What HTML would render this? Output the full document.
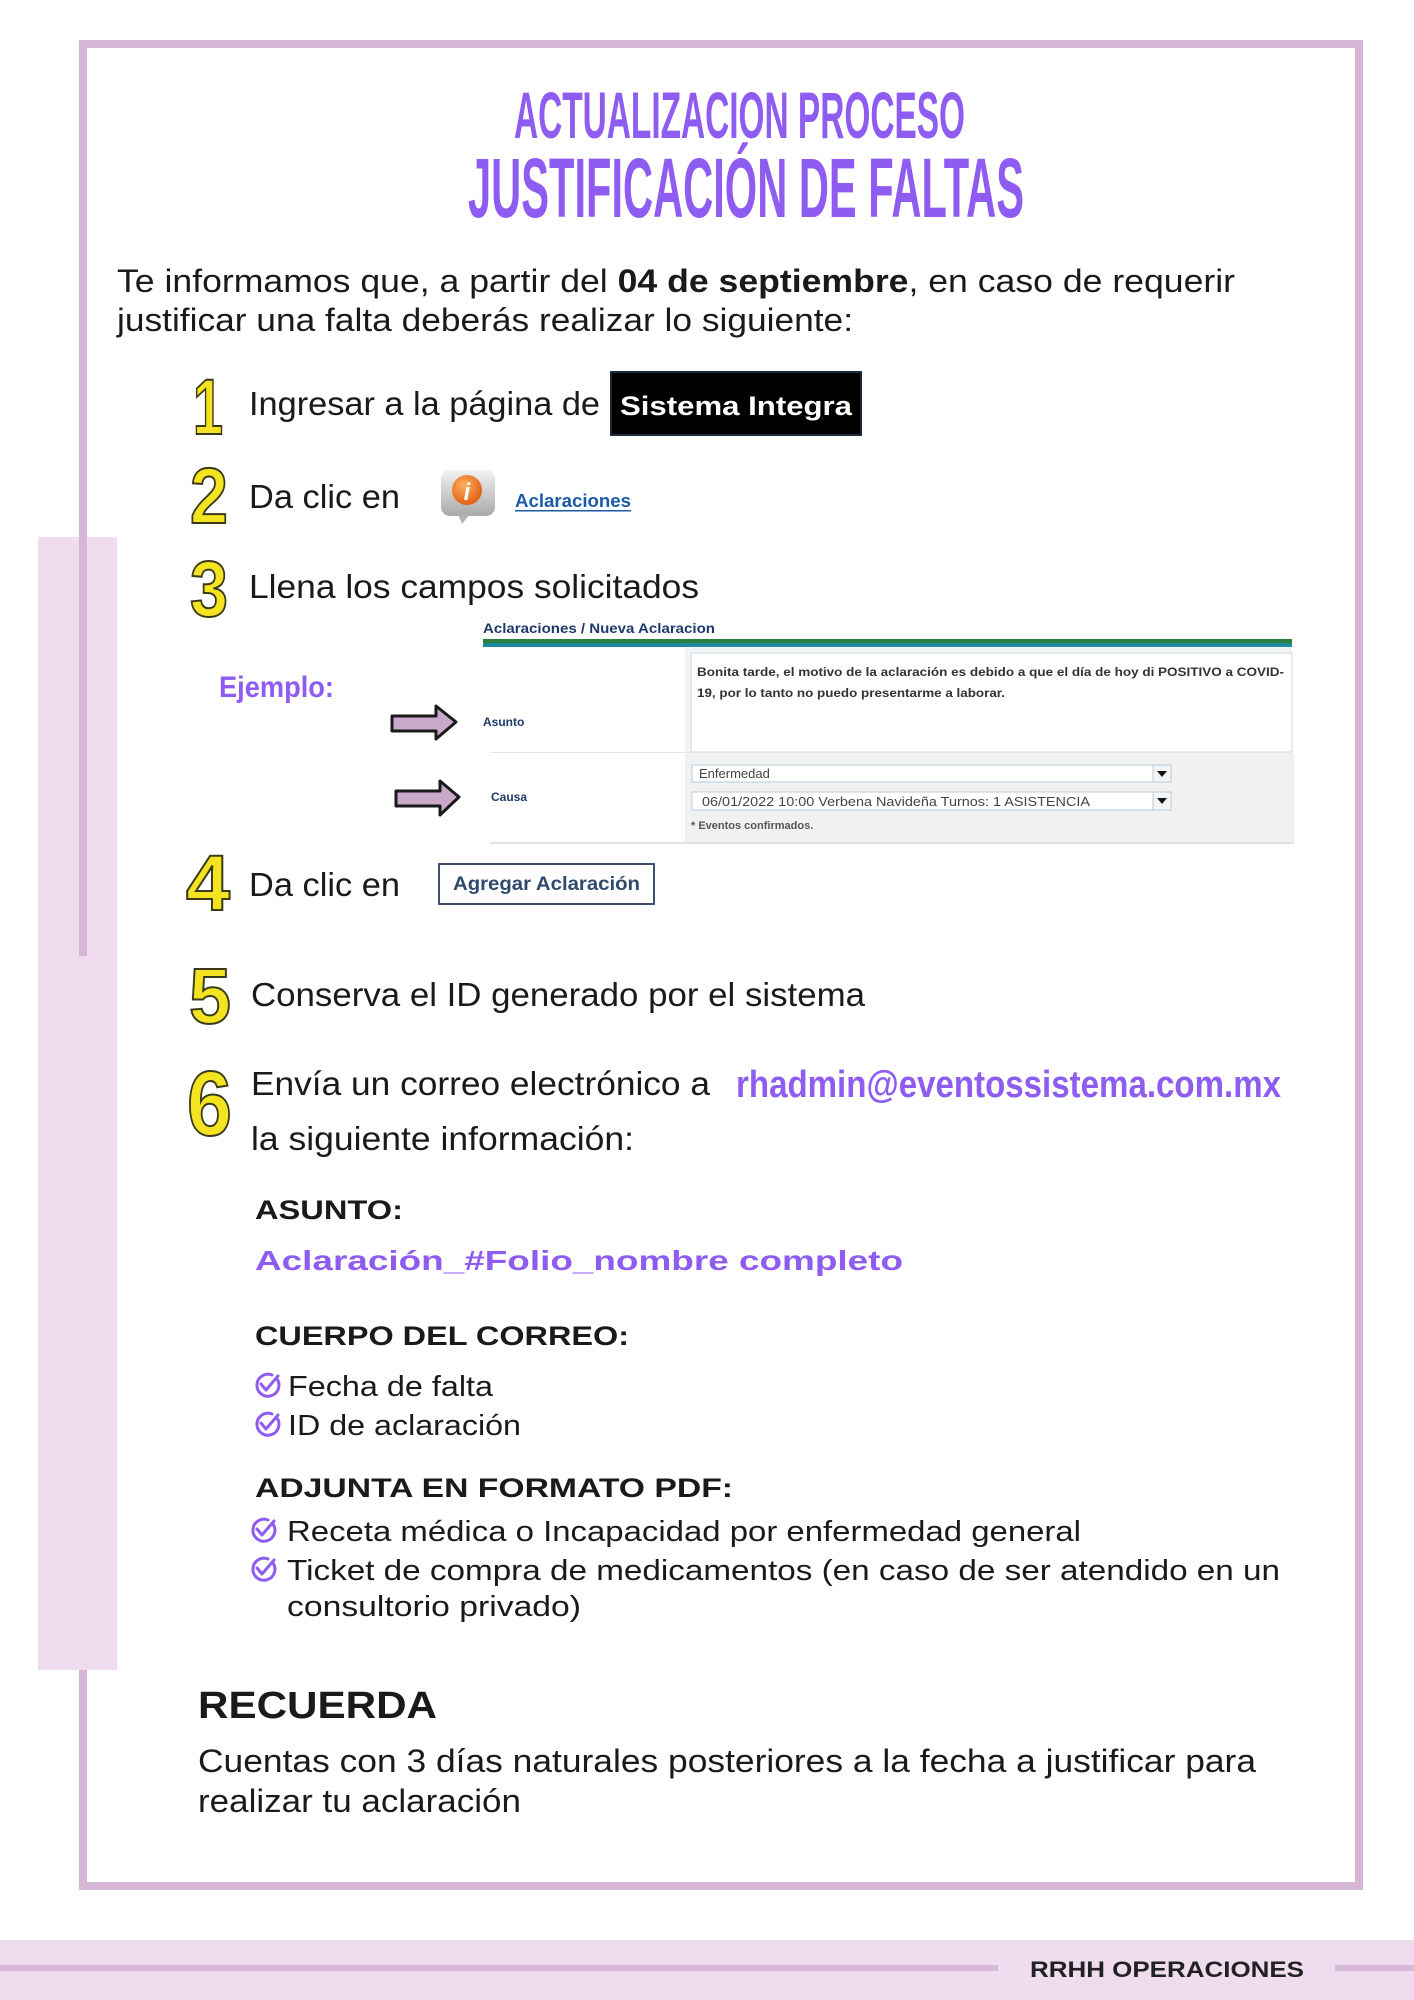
<!DOCTYPE html>
<html><head><meta charset="utf-8"><style>
html,body{margin:0;padding:0;background:#fff;width:1414px;height:2000px;overflow:hidden}
svg{display:block}
text{font-family:"Liberation Sans",sans-serif}
</style></head><body>
<svg width="1414" height="2000" viewBox="0 0 1414 2000" xmlns="http://www.w3.org/2000/svg">
<defs>
<linearGradient id="bar" x1="0" y1="0" x2="0" y2="1"><stop offset="0" stop-color="#2a7f3a"/><stop offset="0.45" stop-color="#2a7f3a"/><stop offset="0.55" stop-color="#1b8c9e"/><stop offset="1" stop-color="#1b8c9e"/></linearGradient>
<linearGradient id="ic" x1="0" y1="0" x2="0" y2="1"><stop offset="0" stop-color="#f2f2f2"/><stop offset="1" stop-color="#a9a9a9"/></linearGradient>
<radialGradient id="or" cx="0.4" cy="0.35" r="0.7"><stop offset="0" stop-color="#ffb060"/><stop offset="1" stop-color="#e05a10"/></radialGradient>
</defs>
<!-- pink side block -->
<rect x="38" y="537" width="79" height="1133" fill="#efdcee"/>
<!-- frame -->
<rect x="79" y="40" width="1284" height="8" fill="#d5b6d5"/>
<rect x="1355" y="40" width="8" height="1850" fill="#d5b6d5"/>
<rect x="79" y="1882" width="1284" height="8" fill="#d5b6d5"/>
<rect x="79" y="40" width="8" height="916" fill="#d5b6d5"/>
<rect x="79" y="1670" width="8" height="220" fill="#d5b6d5"/>

<!-- titles -->
<text x="514" y="138" font-size="66" font-weight="bold" fill="#8f5cf2" textLength="451" lengthAdjust="spacingAndGlyphs">ACTUALIZACION PROCESO</text>
<text x="468" y="217" font-size="84" font-weight="bold" fill="#8f5cf2" textLength="556" lengthAdjust="spacingAndGlyphs">JUSTIFICACIÓN DE FALTAS</text>

<!-- intro -->
<text x="117" y="292" font-size="32" fill="#1a1a1a" textLength="1118" lengthAdjust="spacingAndGlyphs">Te informamos que, a partir del <tspan font-weight="bold">04 de septiembre</tspan>, en caso de requerir</text>
<text x="117" y="331" font-size="32" fill="#1a1a1a" textLength="736" lengthAdjust="spacingAndGlyphs">justificar una falta deberás realizar lo siguiente:</text>

<!-- step numbers -->
<g font-size="79" font-weight="bold" fill="#f4e320" stroke="#3a3a1a" stroke-width="2">
<text x="193" y="434" textLength="30" lengthAdjust="spacingAndGlyphs">1</text>
<text x="190" y="523" textLength="38" lengthAdjust="spacingAndGlyphs">2</text>
<text x="190" y="616" textLength="38" lengthAdjust="spacingAndGlyphs">3</text>
<text x="186" y="910" textLength="44" lengthAdjust="spacingAndGlyphs">4</text>
<text x="189" y="1023" textLength="42" lengthAdjust="spacingAndGlyphs">5</text>
<text x="187" y="1135" font-size="92" textLength="45" lengthAdjust="spacingAndGlyphs">6</text>
</g>

<!-- step 1 -->
<text x="249" y="415" font-size="33" fill="#1a1a1a" textLength="351" lengthAdjust="spacingAndGlyphs">Ingresar a la página de</text>
<rect x="611" y="372" width="250" height="63" fill="#000"/>
<rect x="611" y="372" width="250" height="63" fill="none" stroke="#1a2a3a" stroke-width="2"/>
<text x="620" y="415" font-size="27" font-weight="bold" fill="#fff" textLength="232" lengthAdjust="spacingAndGlyphs">Sistema Integra</text>

<!-- step 2 -->
<text x="249" y="508" font-size="33" fill="#1a1a1a" textLength="151" lengthAdjust="spacingAndGlyphs">Da clic en</text>
<rect x="441" y="470" width="54" height="46" rx="9" fill="url(#ic)"/>
<polygon points="458,514 470,514 462,524" fill="#b0b0b0"/>
<circle cx="467" cy="490" r="15" fill="url(#or)"/>
<text x="467" y="500" font-size="24" font-weight="bold" font-style="italic" fill="#fff" text-anchor="middle">i</text>
<text x="515" y="507" font-size="18" font-weight="bold" fill="#1b5aa8" textLength="116" lengthAdjust="spacingAndGlyphs">Aclaraciones</text>
<rect x="515" y="510" width="116" height="1.5" fill="#1b5aa8"/>

<!-- step 3 -->
<text x="249" y="598" font-size="33" fill="#1a1a1a" textLength="450" lengthAdjust="spacingAndGlyphs">Llena los campos solicitados</text>

<!-- form screenshot -->
<text x="483" y="633" font-size="14" font-weight="bold" fill="#1f3a6a" textLength="232" lengthAdjust="spacingAndGlyphs">Aclaraciones  /  Nueva Aclaracion</text>
<rect x="483" y="639" width="809" height="8" fill="url(#bar)"/>
<rect x="685" y="647" width="607" height="106" fill="#f4f4f4"/>
<rect x="691" y="653" width="601" height="99" fill="#fff" stroke="#c9d9ea" stroke-width="1"/>
<rect x="490" y="752" width="802" height="1" fill="#e6e6e6"/>
<rect x="685" y="753" width="609" height="89" fill="#f1f1f1"/>
<rect x="490" y="842" width="804" height="2" fill="#e2e2e2"/>
<text x="697" y="676" font-size="12" font-weight="bold" fill="#333" textLength="587" lengthAdjust="spacingAndGlyphs">Bonita tarde, el motivo de la aclaración es debido a que el día de hoy di POSITIVO a COVID-</text>
<text x="697" y="697" font-size="12" font-weight="bold" fill="#333" textLength="308" lengthAdjust="spacingAndGlyphs">19, por lo tanto no puedo presentarme a laborar.</text>
<text x="483" y="726" font-size="12" font-weight="bold" fill="#1f3a6a">Asunto</text>
<text x="491" y="801" font-size="12" font-weight="bold" fill="#1f3a6a">Causa</text>
<rect x="692" y="765" width="479" height="17" fill="#fff" stroke="#b8cce0"/>
<rect x="1153" y="765" width="18" height="17" fill="#f4f4f4" stroke="#b8cce0"/>
<polygon points="1157,771 1167,771 1162,777" fill="#111"/>
<text x="699" y="778" font-size="13" fill="#444">Enfermedad</text>
<rect x="692" y="792" width="479" height="18" fill="#fff" stroke="#b8cce0"/>
<rect x="1153" y="792" width="18" height="18" fill="#f4f4f4" stroke="#b8cce0"/>
<polygon points="1157,798 1167,798 1162,804" fill="#111"/>
<text x="702" y="806" font-size="13" fill="#444" textLength="388" lengthAdjust="spacingAndGlyphs">06/01/2022 10:00 Verbena Navideña Turnos: 1 ASISTENCIA</text>
<text x="691" y="829" font-size="11" font-weight="bold" fill="#555">* Eventos confirmados.</text>

<!-- arrows -->
<g stroke="#1a1a1a" stroke-width="3" stroke-linejoin="round">
<polygon points="392,716 436,716 436,706 456,722 436,739 436,731 392,731" fill="#c9a8c9"/>
<polygon points="396,791 440,791 440,781 459,797 440,815 440,806 396,806" fill="#c9a8c9"/>
</g>
<text x="219" y="697" font-size="30" font-weight="bold" fill="#8f5cf2" textLength="115" lengthAdjust="spacingAndGlyphs">Ejemplo:</text>

<!-- step 4 -->
<text x="249" y="896" font-size="33" fill="#1a1a1a" textLength="151" lengthAdjust="spacingAndGlyphs">Da clic en</text>
<rect x="439" y="864" width="215" height="40" fill="#fff" stroke="#3e5070" stroke-width="2"/>
<text x="453" y="890" font-size="19" font-weight="bold" fill="#2f4a6e" textLength="187" lengthAdjust="spacingAndGlyphs">Agregar Aclaración</text>

<!-- step 5 -->
<text x="251" y="1006" font-size="33" fill="#1a1a1a" textLength="614" lengthAdjust="spacingAndGlyphs">Conserva el ID generado por el sistema</text>

<!-- step 6 -->
<text x="251" y="1095" font-size="33" fill="#1a1a1a" textLength="459" lengthAdjust="spacingAndGlyphs">Envía un correo electrónico a</text>
<text x="736" y="1097" font-size="38" font-weight="bold" fill="#8f5cf2" textLength="545" lengthAdjust="spacingAndGlyphs">rhadmin@eventossistema.com.mx</text>
<text x="251" y="1150" font-size="33" fill="#1a1a1a" textLength="383" lengthAdjust="spacingAndGlyphs">la siguiente información:</text>

<text x="255" y="1219" font-size="27" font-weight="bold" fill="#1a1a1a" textLength="148" lengthAdjust="spacingAndGlyphs">ASUNTO:</text>
<text x="255" y="1270" font-size="28" font-weight="bold" fill="#8f5cf2" textLength="648" lengthAdjust="spacingAndGlyphs">Aclaración_#Folio_nombre completo</text>
<text x="255" y="1345" font-size="27" font-weight="bold" fill="#1a1a1a" textLength="374" lengthAdjust="spacingAndGlyphs">CUERPO DEL CORREO:</text>

<g fill="none" stroke="#8f5cf2" stroke-width="3" stroke-linecap="round" stroke-linejoin="round">
<path d="M277,1379 A11,11 0 1 1 272,1375 M261,1384 l5,6 l12,-14"/>
<path d="M277,1418 A11,11 0 1 1 272,1414 M261,1423 l5,6 l12,-14"/>
<path d="M273,1524 A11,11 0 1 1 268,1520 M257,1529 l5,6 l12,-14"/>
<path d="M273,1563 A11,11 0 1 1 268,1559 M257,1568 l5,6 l12,-14"/>
</g>
<text x="288" y="1396" font-size="29" fill="#1a1a1a" textLength="205" lengthAdjust="spacingAndGlyphs">Fecha de falta</text>
<text x="288" y="1435" font-size="29" fill="#1a1a1a" textLength="233" lengthAdjust="spacingAndGlyphs">ID de aclaración</text>

<text x="255" y="1497" font-size="27" font-weight="bold" fill="#1a1a1a" textLength="478" lengthAdjust="spacingAndGlyphs">ADJUNTA EN FORMATO PDF:</text>
<text x="287" y="1541" font-size="29" fill="#1a1a1a" textLength="794" lengthAdjust="spacingAndGlyphs">Receta médica o Incapacidad por enfermedad general</text>
<text x="287" y="1580" font-size="29" fill="#1a1a1a" textLength="993" lengthAdjust="spacingAndGlyphs">Ticket de compra de medicamentos (en caso de ser atendido en un</text>
<text x="287" y="1616" font-size="29" fill="#1a1a1a" textLength="294" lengthAdjust="spacingAndGlyphs">consultorio privado)</text>

<!-- recuerda -->
<text x="198" y="1718" font-size="38" font-weight="bold" fill="#1a1a1a" textLength="239" lengthAdjust="spacingAndGlyphs">RECUERDA</text>
<text x="198" y="1772" font-size="32" fill="#1a1a1a" textLength="1058" lengthAdjust="spacingAndGlyphs">Cuentas con 3 días naturales posteriores a la fecha a justificar para</text>
<text x="198" y="1812" font-size="32" fill="#1a1a1a" textLength="323" lengthAdjust="spacingAndGlyphs">realizar tu aclaración</text>

<!-- footer -->
<rect x="0" y="1940" width="1414" height="60" fill="#efdcee"/>
<rect x="0" y="1965" width="998" height="6" fill="#d7b8d6"/>
<rect x="1335" y="1965" width="79" height="6" fill="#d7b8d6"/>
<text x="1030" y="1977" font-size="22" font-weight="bold" fill="#222" textLength="274" lengthAdjust="spacingAndGlyphs">RRHH OPERACIONES</text>
</svg>
</body></html>
